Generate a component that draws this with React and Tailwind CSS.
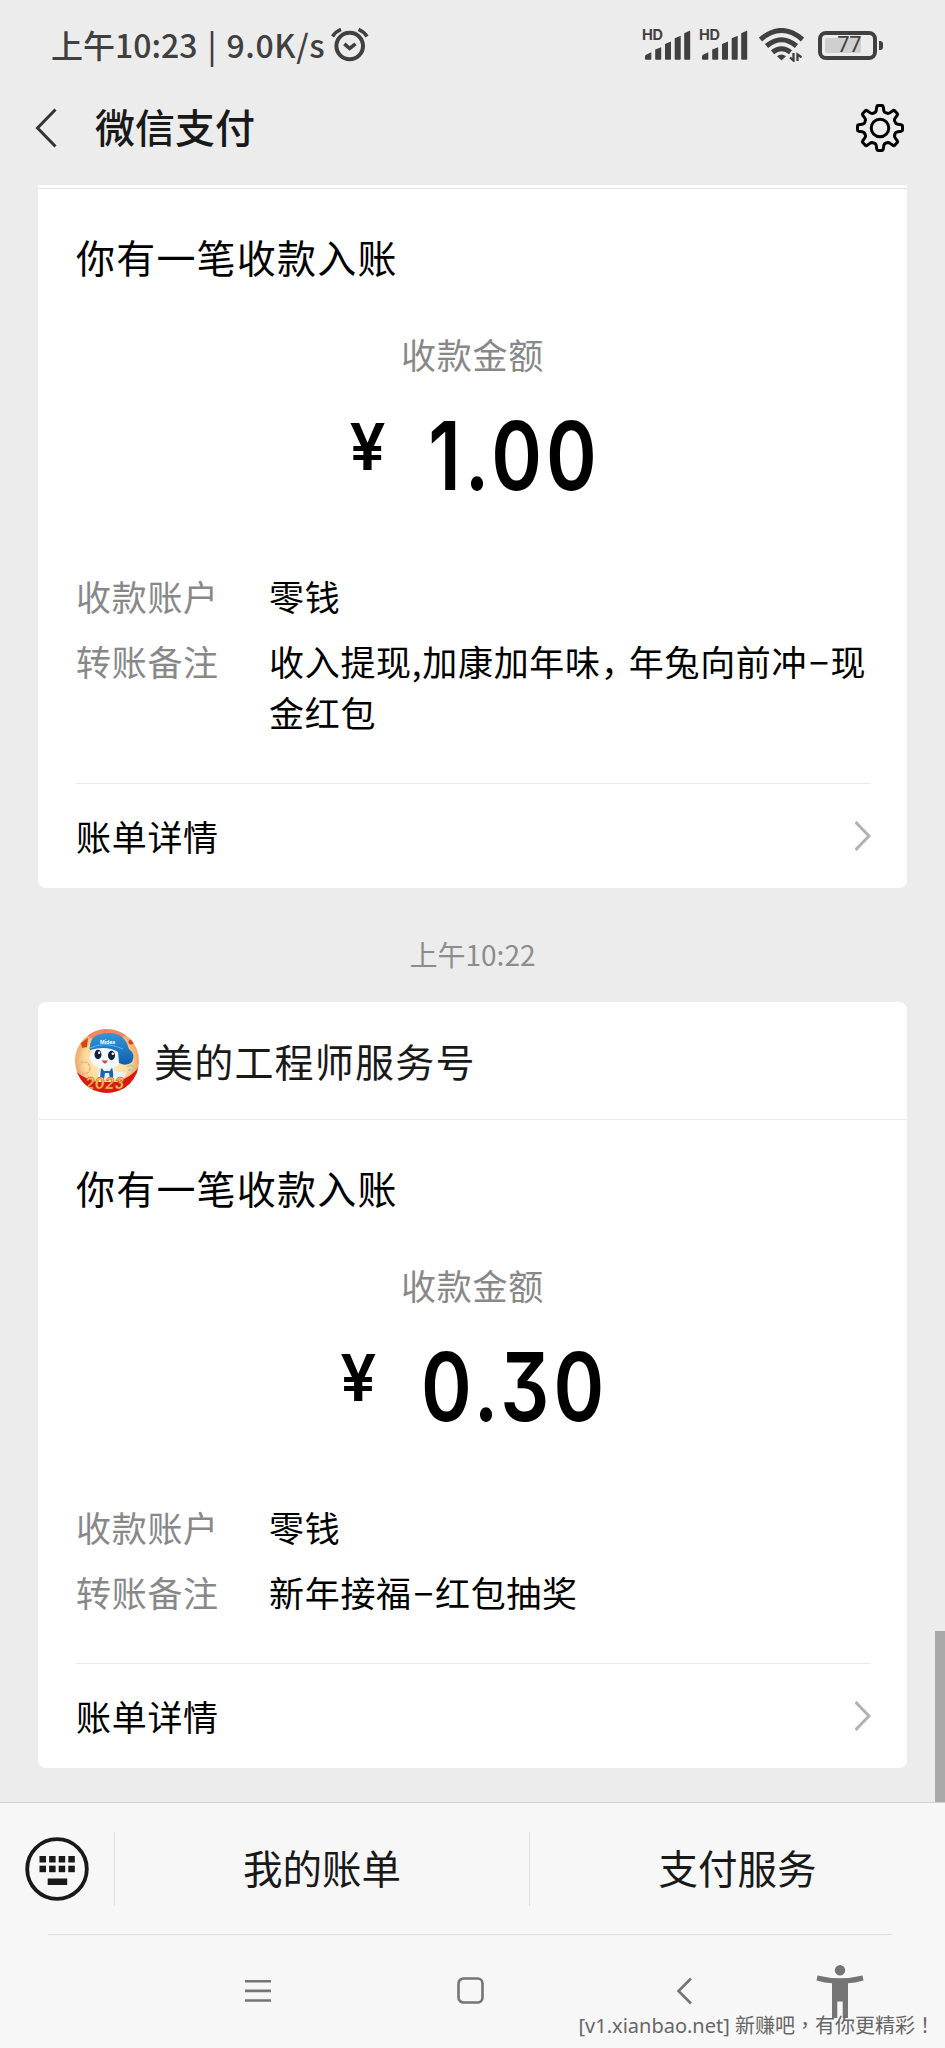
import React from 'react'

const receipts = [
    {
        id: 1,
        amount: '1.00',
        account: '零钱',
        remark: '收入提现,加康加年味，年兔向前冲−现\n金红包',
    },
    {
        id: 2,
        sender: '美的工程师服务号',
        amount: '0.30',
        account: '零钱',
        remark: '新年接福−红包抽奖',
    },
]

// Eight tooth outline of the settings cog, centred on 0,0
const gearPath = () => {
    let d = ''
    for (let i = 0; i < 8; i++) {
        const a = (i * Math.PI) / 4
        const p = (x, y) => {
            const px = x * Math.cos(a) - y * Math.sin(a)
            const py = x * Math.sin(a) + y * Math.cos(a)
            return `${px.toFixed(2)} ${py.toFixed(2)}`
        }
        d += `${i === 0 ? 'M' : 'L'}${p(-4.6, -15.8)} Q${p(-3.9, -16.6)} ${p(-3.7, -18)} L${p(-3.2, -21.3)} Q${p(-3, -22.5)} ${p(-2, -22.5)} L${p(2, -22.5)} Q${p(3, -22.5)} ${p(3.2, -21.3)} L${p(3.7, -18)} Q${p(3.9, -16.6)} ${p(4.6, -15.8)} Q${p(6, -14.6)} ${p(7.9, -14.7)} `
    }
    return d + 'Z'
}

const SignalIcon = () => (
    <div className="relative h-[30px] w-[48px]">
        <span className="absolute -left-px top-0 font-['Inter'] text-[14.500px] font-bold leading-[10px] tracking-[-0.300px]">HD</span>
        <svg className="block" width="48" height="30" viewBox="0 0 48 30" fill="currentColor">
            <path d="M2 28 v-1.500 Q2 25 3.500 24.400 L8.300 22.300 V29 Q8.300 29.800 7.500 29.800 H3 Q2 29.800 2 29Z" />
            <path d="M12.200 19.500 L18.200 17.200 V29 Q18.200 29.800 17.400 29.800 H13 Q12.200 29.800 12.200 29Z" />
            <path d="M22 14 L28 11.500 V29 Q28 29.800 27.200 29.800 H22.800 Q22 29.800 22 29Z" />
            <path d="M31.700 8.300 L37.700 5.800 V29 Q37.700 29.800 36.900 29.800 H32.500 Q31.700 29.800 31.700 29Z" />
            <path d="M41.200 3.200 L47.200 0.600 V29 Q47.200 29.800 46.400 29.800 H42 Q41.200 29.800 41.200 29Z" />
        </svg>
    </div>
)

const AlarmIcon = () => (
    <svg width="38" height="36" viewBox="0 0 38 36" fill="none" stroke="currentColor" strokeWidth="4">
        <circle cx="18.700" cy="19" r="13.300" />
        <path d="M1.500 9.500 Q4.500 4.500 10 2.300 M36 9.500 Q33 4.500 27.500 2.300" strokeWidth="3.600" />
        <path d="M13.300 16.800 L18.700 21.500 L24.500 16.800" strokeWidth="3.600" />
    </svg>
)

const WifiIcon = () => (
    <svg width="45" height="34" viewBox="0 0 45 34" fill="none" stroke="currentColor" strokeWidth="5">
        <path d="M1.500 11.500 Q22.500 -6.500 43.500 11.500" />
        <path d="M7.500 18 Q22.500 5.500 37.500 18" />
        <path d="M13.500 24.200 Q22.500 17.200 31.500 24.200" />
        <path d="M18 28.200 Q22.500 24.800 27 28.200 L22.500 32.500Z" fill="currentColor" stroke="none" />
        <path d="M34.500 25 V32.500 L31 29.500 M38.500 33 V26.500 L42.500 29.200" strokeWidth="2.300" />
    </svg>
)

const Battery = () => (
    <div className="flex items-center gap-[2px]">
        <div className="flex h-[29px] w-[59px] items-center rounded-[8px] border-[4px] border-[#404040] pl-[3px]">
            <div className="flex h-[15px] w-[36px] items-center justify-end rounded-[2px] bg-[#cfcfcf] font-['Roboto'] text-[22px] leading-none tracking-[-0.500px]">77</div>
        </div>
        <div className="h-[9px] w-[4px] rounded-r-[3px] bg-[#404040]" />
    </div>
)

const StatusBar = () => (
    <div className="flex h-[90px] items-center justify-between pl-[51px] pr-[62px] text-[#404040]">
        <div className="flex items-center gap-[6px]">
            <div className="flex whitespace-pre pb-[2px] text-[32px] font-medium leading-none">
                <span>上午10:23</span>
                <span className="ml-[10px]">|</span>
                <span className="ml-[10px] tracking-[0.600px]">9.0K/s</span>
            </div>
            <AlarmIcon />
        </div>
        <div className="flex items-center">
            <SignalIcon />
            <div className="ml-[9px]"><SignalIcon /></div>
            <div className="ml-[11px]"><WifiIcon /></div>
            <div className="ml-[14px]"><Battery /></div>
        </div>
    </div>
)

const Header = () => (
    <div className="flex h-[76px] items-center pl-[35px] pr-[39px]">
        <svg width="22" height="40" viewBox="0 0 22 40" fill="none" stroke="#333" strokeWidth="3">
            <path d="M20.500 1.500 L2.500 20 L20.500 38.500" />
        </svg>
        <h1 className="ml-[38px] flex-1 pb-[4px] text-[40px] font-medium leading-none text-[#191919]">微信支付</h1>
        <svg width="52" height="52" viewBox="-26 -26 52 52" fill="none" stroke="#000" strokeWidth="3" strokeLinejoin="round">
            <path d={gearPath()} />
            <circle r="8.800" />
        </svg>
    </div>
)

const Avatar = () => (
    <svg width="64" height="64" viewBox="0 0 64 64">
        <defs>
            <clipPath id="avatarClip"><circle cx="32" cy="32" r="32" /></clipPath>
            <radialGradient id="avatarSky">
                <stop offset="0" stopColor="#fff0c4" />
                <stop offset="0.700" stopColor="#fbdd9c" />
                <stop offset="1" stopColor="#f3a468" />
            </radialGradient>
            <linearGradient id="helmet" x1="0" y1="0" x2="0" y2="1">
                <stop offset="0" stopColor="#3596d8" />
                <stop offset="1" stopColor="#0d5fae" />
            </linearGradient>
        </defs>
        <g clipPath="url(#avatarClip)">
            <rect width="64" height="64" fill="url(#avatarSky)" />
            <path d="M12 6 Q28 -6 52 6 L46 9 Q32 -1 18 11Z" fill="#f28563" />
            <path d="M6 14 L13 9 L12 18 L7 19Z" fill="#d8431d" />
            <circle cx="56" cy="13" r="2.500" fill="#d8431d" />
            <circle cx="9" cy="39" r="6" fill="none" stroke="#f0a987" strokeWidth="1.500" strokeDasharray="3 1" />
            <path d="M52 38 l4 -2 4 3 M53 41 h5" stroke="#9fc9b4" strokeWidth="1.300" fill="none" />
            <path d="M0 42 Q10 50 22 53 L42 53 Q56 48 64 38 V64 H0Z" fill="#db1712" />
            {/* body */}
            <path d="M25 37 Q31 34 38 37 L44 51 H23Z" fill="#e9f1fb" />
            <path d="M26 38 L29 42 H35 L37 37 L39 50 H25Z" fill="#1c64a8" />
            <path d="M30 44 h4 l1 6 h-6Z" fill="#e9f1fb" />
            <path d="M39 42 L51 44 L48 50 L38 49Z" fill="#eff5fc" />
            {/* head */}
            <ellipse cx="31" cy="28" rx="16" ry="12" fill="#f4f8ff" />
            <path d="M15 24 Q12 4 34 4 Q50 4 54 20 Q61 25 57 33 Q51 38 44 34 L43 23 Q32 16 15 21Z" fill="url(#helmet)" />
            <path d="M15 19 Q30 12 48 20" fill="none" stroke="#57b4ef" strokeWidth="1.200" />
            <text x="25" y="15" fill="#fff" fontSize="5" fontWeight="700" fontFamily="Inter">Midea</text>
            <ellipse cx="23" cy="25.500" rx="3.500" ry="4.700" fill="#14213d" />
            <ellipse cx="36.500" cy="26.500" rx="3.500" ry="4.700" fill="#14213d" />
            <circle cx="24.200" cy="23.800" r="1.200" fill="#fff" />
            <circle cx="37.800" cy="24.800" r="1.200" fill="#fff" />
            <path d="M27 31 Q30 32 32.500 31 Q32 35 29.500 34.500 Q27.500 34 27 31Z" fill="#e2403a" />
            <text x="10" y="60" fill="#ffc45c" stroke="#b8470e" strokeWidth="0.500" fontSize="17" fontWeight="900" fontStyle="italic" fontFamily="Lato">2023</text>
        </g>
    </svg>
)

// The full-width comma and the dash are set with their own spacing
const Remark = ({ text }) =>
    text.split('\n').map((line) => (
        <div key={line} className="whitespace-nowrap">
            {line.split(/([，−])/).map((part, i) => {
                if (part === '，') return <span key={i} className="tracking-[10.500px] [font-feature-settings:'halt']">{part}</span>
                if (part === '−') return <span key={i} className="ml-[2px] mr-px">{part}</span>
                return part
            })}
        </div>
    ))

const Field = ({ label, value }) => (
    <div className="flex text-[35px] leading-[51px] tracking-[0.700px]">
        <span className="w-[193px] shrink-0 text-[#888]">{label}</span>
        <div className="text-black"><Remark text={value} /></div>
    </div>
)

const ReceiptCard = ({ item }) => (
    <div className={`mx-[38px] bg-white ${item.sender ? 'rounded-[8px]' : 'rounded-b-[8px]'}`}>
        {item.sender ? (
            <div className="flex h-[118px] items-center border-b border-[#ebebeb] pl-[37px]">
                <Avatar />
                <span className="ml-[15px] text-[39px] leading-none tracking-[1.200px] text-[#191919]">{item.sender}</span>
            </div>
        ) : (
            <div className="h-[4px] border-b border-[#e5e5e5]" />
        )}
        <div className="px-[38px] pt-[42px]">
            <h2 className="text-[39px] leading-[50px] tracking-[1.200px] text-black">你有一笔收款入账</h2>
            <p className="mt-[48px] text-center text-[35px] leading-[50px] tracking-[0.700px] text-[#888]">收款金额</p>
            <div className="mt-[27px] flex h-[100px] justify-center text-black">
                <span className="mt-[9px] font-['Inter'] text-[64px] font-semibold leading-[64px]">¥</span>
                <span className="-mr-[26px] ml-[23px] origin-center scale-x-[0.81] font-['Inter'] text-[95px] font-semibold leading-[100px] tracking-[5px] [font-feature-settings:'cv09']">{item.amount}</span>
            </div>
            <div className="mt-[64px] flex flex-col gap-[14px]">
                <Field label="收款账户" value={item.account} />
                <Field label="转账备注" value={item.remark} />
            </div>
            <div className="-mr-px mt-[46px] flex h-[105px] items-center justify-between border-t border-[#e8e8e8]">
                <span className="pb-[2px] text-[35px] leading-none tracking-[0.700px] text-black">账单详情</span>
                <svg className="-mr-px" width="16" height="32" viewBox="0 0 16 32" fill="none" stroke="#b2b2b2" strokeWidth="3">
                    <path d="M0.500 2 L14 16 L0.500 30" />
                </svg>
            </div>
        </div>
    </div>
)

const KeyboardIcon = () => (
    <svg width="64" height="64" viewBox="0 0 64 64" fill="#191919">
        <circle cx="32" cy="32" r="29.800" fill="none" stroke="#191919" strokeWidth="3.800" />
        {[0, 1, 2, 3].map((i) => (
            <g key={i}>
                <rect x={14.5 + i * 9.6} y="19" width="6.500" height="6.500" />
                <rect x={14.5 + i * 9.6} y="28.700" width="6.500" height="6.500" />
            </g>
        ))}
        <rect x="22.700" y="41.500" width="19.500" height="6.500" />
    </svg>
)

const MenuBar = () => (
    <div className="flex h-[132px] items-center border-t-[1.500px] border-[#cfcfcf]">
        <div className="flex h-[74px] w-[115px] items-center border-r border-[#e0e0e0] pl-[25px]">
            <KeyboardIcon />
        </div>
        <div className="flex h-[74px] w-[415px] items-center justify-center border-r border-[#e0e0e0] pb-[4px] text-[39.500px] text-[#191919]">我的账单</div>
        <div className="flex h-[74px] flex-1 items-center justify-center pb-[4px] text-[39.500px] text-[#191919]">支付服务</div>
    </div>
)

const NavBar = () => (
    <div className="relative h-[114px]">
        <div className="ml-[48px] mr-[53px] border-t border-[#dedede]" />
        <div className="flex items-start pl-[245px] pt-[30px] text-[#757575]">
            <svg className="mt-[13px]" width="26" height="26" viewBox="0 0 26 26" stroke="currentColor" strokeWidth="2.600">
                <path d="M0 3.300 H26 M0 12.900 H26 M0 22.500 H26" />
            </svg>
            <svg className="ml-[186px] mt-[12px]" width="27" height="27" viewBox="0 0 27 27" fill="none" stroke="currentColor" strokeWidth="2.600">
                <rect x="1.500" y="1.500" width="24" height="24" rx="5" />
            </svg>
            <svg className="ml-[192px] mt-[12px]" width="16" height="28" viewBox="0 0 16 28" fill="none" stroke="currentColor" strokeWidth="2.600">
                <path d="M15 1.500 L2.500 14 L15 26.500" />
            </svg>
            <svg className="ml-[124px]" width="48" height="53" viewBox="0 0 48 53" fill="currentColor">
                <circle cx="24" cy="5.200" r="5.200" />
                <path d="M1.500 10.500 Q24 16 46.500 10.500 L47.500 15.500 Q39 18 32 18.300 V53 H26.700 V36.500 H21.300 V53 H16 V18.300 Q9 18 0.500 15.500Z" />
            </svg>
        </div>
        <p className="absolute bottom-[7px] right-[10px] whitespace-nowrap font-['Noto_Sans','Noto_Sans_CJK_SC',sans-serif] text-[20px] leading-[30px] text-[#666]">
            [v1.xianbao.net] 新赚吧<span className="font-['Noto_Sans_CJK_TC',sans-serif]" lang="zh-TW">，</span>有你更精彩<span className="font-['Noto_Sans_CJK_TC',sans-serif]" lang="zh-TW">！</span>
        </p>
    </div>
)

const App = () => {
    return (
        <div className="relative flex h-[2048px] w-[945px] flex-col overflow-hidden bg-[#ececec] font-['Noto_Sans_CJK_SC',sans-serif]">
            <StatusBar />
            <Header />
            <div className="mt-[19px] flex-1">
                <ReceiptCard item={receipts[0]} />
                <p className="flex h-[114px] items-center justify-center pt-[18px] text-[28px] text-[#8c8c8c]">上午10:22</p>
                <ReceiptCard item={receipts[1]} />
            </div>
            <div className="absolute right-0 top-[1631px] h-[171px] w-[10px] bg-[#a9a9a9]" />
            <div className="shrink-0 bg-[#f7f7f7]">
                <MenuBar />
                <NavBar />
            </div>
        </div>
    )
}

export default App
